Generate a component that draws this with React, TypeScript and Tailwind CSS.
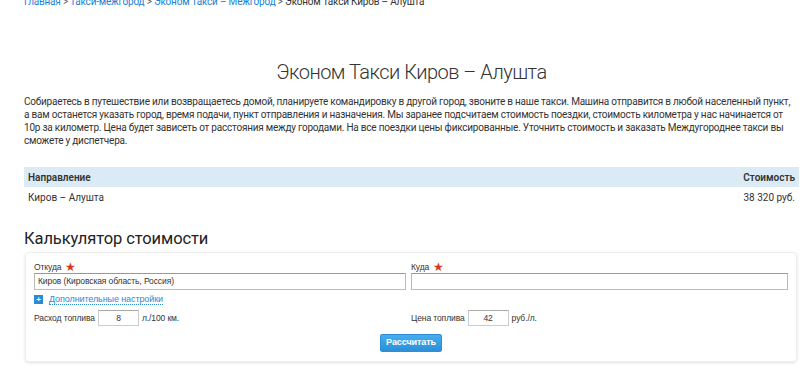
const crumbs = ["Главная", "Такси-межгород", "Эконом Такси – Межгород"];

const Star = () => <span className="ml-1 text-[12px] leading-none text-[#d9361e]">★</span>;

const App = () => {
  return (
    <div className="min-h-[380px] w-[807px] overflow-hidden bg-white pl-6 pr-2 text-[#333]">
      <div className="mt-[-4px] h-[12px] font-['Roboto',sans-serif] text-[10px] leading-[12px] tracking-[-0.2px] text-[#555]">
        {crumbs.map((c) => (
          <span key={c}>
            <a className="text-[#1a7fd4]">{c}</a> &gt;{" "}
          </span>
        ))}
        <span className="text-[#333]">Эконом Такси Киров – Алушта</span>
      </div>

      <h1 className="mt-[50px] text-center font-['Roboto',sans-serif] text-[20px] font-light leading-7 tracking-[-0.5px] text-[#333]">
        Эконом Такси Киров – Алушта
      </h1>

      <p className="mt-[9px] pr-[6px] font-['Roboto',sans-serif] text-[10px] leading-[13px] tracking-[-0.22px] text-[#333]">
        Собираетесь в путешествие или возвращаетесь домой, планируете командировку в другой город, звоните в наше такси. Машина отправится в любой населенный пункт, а вам останется указать город, время подачи, пункт отправления и назначения. Мы заранее подсчитаем стоимость поездки, стоимость километра у нас начинается от 10р за километр. Цена будет зависеть от расстояния между городами. На все поездки цены фиксированные. Уточнить стоимость и заказать Междугороднее такси вы сможете у диспетчера.
      </p>

      <table className="mt-5 w-full font-['Roboto',sans-serif] text-[10px] text-[#333]">
        <thead>
          <tr className="h-5 bg-[#daebf6]">
            <th className="pl-1 text-left font-semibold">Направление</th>
            <th className="pr-1 text-right font-semibold">Стоимость</th>
          </tr>
        </thead>
        <tbody>
          <tr className="h-5">
            <td className="pl-1">Киров – Алушта</td>
            <td className="pr-1 text-right">38 320 руб.</td>
          </tr>
        </tbody>
      </table>

      <h2 className="mt-[20px] font-['Roboto',sans-serif] text-[16.5px] leading-6 tracking-[-0.1px] text-[#222]">
        Калькулятор стоимости
      </h2>

      <div className="ml-px mr-[2px] mt-[1px] rounded-sm border border-[#eee] px-[8px] pb-[9px] pt-[8px] font-['Liberation_Sans',sans-serif] text-[8.5px] tracking-[-0.1px] text-[#333] shadow-[0_1px_3px_rgba(0,0,0,0.12)]">
        <div className="grid grid-cols-[372px_1fr] gap-[5px]">
          <div>
            <div className="flex h-3 items-center">Откуда <Star /></div>
            <div className="flex h-[17px] items-center border border-[#bbb] border-t-[#999] bg-white px-[3px]">
              Киров (Кировская область, Россия)
            </div>
          </div>
          <div>
            <div className="flex h-3 items-center">Куда <Star /></div>
            <div className="h-[17px] border border-[#bbb] border-t-[#999] bg-white" />
          </div>
        </div>

        <div className="mt-[4px] flex h-[11px] items-center gap-[6px]">
          <span className="flex h-[9px] w-[9px] items-center justify-center bg-[#2b8ad6] text-[8px] font-bold leading-none text-white">+</span>
          <span className="border-b border-dotted border-[#2b8ad6] text-[9px] leading-[10px] text-[#2b8ad6]">Дополнительные настройки</span>
        </div>

        <div className="mt-[5px] grid grid-cols-[372px_1fr] gap-[5px]">
          <div className="flex items-center gap-[3px]">
            <span>Расход топлива</span>
            <span className="flex h-[16px] w-[41px] items-center justify-center border border-[#ccc] border-t-[#aaa]">8</span>
            <span>л./100 км.</span>
          </div>
          <div className="flex items-center gap-[3px]">
            <span>Цена топлива</span>
            <span className="flex h-[16px] w-[41px] items-center justify-center border border-[#ccc] border-t-[#aaa]">42</span>
            <span>руб./л.</span>
          </div>
        </div>

        <div className="mt-[8px] flex justify-center">
          <button className="h-[18px] rounded-[2px] border border-[#2f8fd4] bg-gradient-to-b from-[#45aef0] to-[#2b8fd9] px-[5px] text-[9px] font-bold text-white">
            Рассчитать
          </button>
        </div>
      </div>
    </div>
  );
};

export default App;
